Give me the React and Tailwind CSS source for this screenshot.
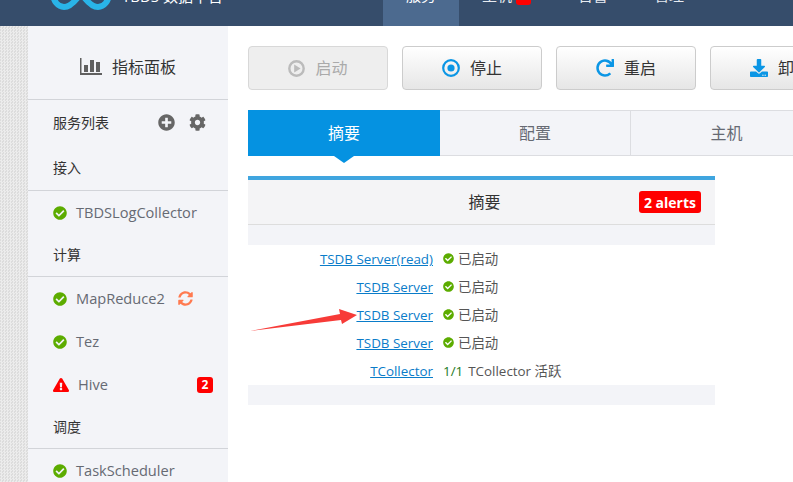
import { FaCheckCircle, FaExclamationTriangle, FaPlusCircle, FaCog, FaSyncAlt, FaRedo, FaDownload } from "react-icons/fa";

const font = "font-['Open_Sans','Noto_Sans_CJK_SC',sans-serif]";

function CheckIcon({ className }) {
  return <FaCheckCircle className={"text-[#5cac00] " + className} />;
}

function ActionButton({ icon, label, disabled }) {
  return (
    <div
      className={
        "flex h-[44px] w-[140px] shrink-0 items-center justify-center gap-[10px] rounded-[4px] border text-[16px] " +
        (disabled
          ? "border-[#d8d8d8] bg-[#eeeeee] text-[#aaaaaa]"
          : "border-[#cccccc] bg-gradient-to-b from-white to-[#e6e6e6] text-[#333333]")
      }
    >
      {icon}
      <span className="whitespace-nowrap">{label}</span>
    </div>
  );
}

function GroupTitle({ children, className = "h-[43px]" }) {
  return (
    <div className={"flex items-center border-b border-[#d2d4d9] pb-[2px] pl-[25px] text-[14px] text-[#333333] " + className}>
      {children}
    </div>
  );
}

function ServiceRow({ icon, name, extra }) {
  return (
    <div className="flex h-[43px] items-center pl-[25px] text-[14.6px] text-[#666a73]">
      {icon || <CheckIcon className="mr-[9px] size-[14px]" />}
      <span>{name}</span>
      {extra}
    </div>
  );
}

function SummaryRow({ name, children }) {
  return (
    <div className="flex h-[28px] items-center text-[13.4px]">
      <a href="#" className="w-[185px] shrink-0 text-right text-[#0a7cc9] underline">
        {name}
      </a>
      <div className="ml-[10px] flex items-center text-[#555555]">{children}</div>
    </div>
  );
}

function Started() {
  return (
    <>
      <CheckIcon className="mr-[4px] size-[11px]" />
      已启动
    </>
  );
}

export default function App() {
  return (
    <div className={"relative h-[482px] w-[793px] overflow-hidden bg-white " + font}>
      {/* top nav, cut off by the screenshot */}
      <div className="flex h-[26px] bg-[#364d6b]">
        <div className="relative w-[383px] shrink-0 overflow-hidden">
          <svg className="absolute top-[-26px] left-[50px]" width="62" height="39" viewBox="0 0 62 39" fill="none">
            <path d="M31 19 C24 8 18 5 13 5 C7 5 3 11 3 19 C3 27 8 33 14 33 C20 33 25 28 31 19 C37 10 42 5 48 5 C55 5 59 11 59 19 C59 27 54 33 48 33 C43 33 37 28 31 19" stroke="#29b4e8" strokeWidth="6" />
          </svg>
          <span className="absolute top-[-14px] left-[122px] whitespace-nowrap text-[15px] leading-[20px] text-white">
            TBDS 数据平台
          </span>
        </div>
        <div className="relative flex w-[76px] shrink-0 justify-center overflow-hidden bg-[#4c6a8f]">
          <span className="absolute top-[-15px] text-[15px] leading-[20px] text-white">服务</span>
        </div>
        <div className="relative w-[119px] shrink-0 overflow-hidden">
          <span className="absolute top-[-15px] left-[23px] whitespace-nowrap text-[15px] leading-[20px] text-[#e6eaf0]">主机</span>
          <span className="absolute top-[-8px] left-[57px] h-[13px] w-[15px] rounded-[3px] bg-[#ff0000]" />
        </div>
        <div className="relative w-[76px] shrink-0 overflow-hidden">
          <span className="absolute top-[-15px] left-0 whitespace-nowrap text-[15px] leading-[20px] text-[#e6eaf0]">告警</span>
        </div>
        <div className="relative w-[60px] shrink-0 overflow-hidden">
          <span className="absolute top-[-15px] left-0 whitespace-nowrap text-[15px] leading-[20px] text-[#e6eaf0]">管理</span>
        </div>
      </div>

      <div className="flex h-[456px]">
        {/* textured gutter */}
        <div className="w-[28px] shrink-0 bg-[conic-gradient(#ececec_25%,#dcdcdc_0_50%,#ececec_0_75%,#dcdcdc_0)] bg-[size:3px_3px]" />

        {/* sidebar */}
        <div className="w-[200px] shrink-0 overflow-hidden bg-[#f3f4f8]">
          <div className="flex h-[74px] items-center justify-center gap-[10px] border-b border-[#d2d4d9] pt-[8px] text-[16px] text-[#333333]">
            <svg className="text-[#606060]" width="22" height="17" viewBox="0 0 22 17" fill="currentColor">
              <rect x="0" y="0" width="1.5" height="17" />
              <rect x="0" y="15" width="22" height="2" />
              <rect x="4" y="7" width="4" height="7" />
              <rect x="10" y="2" width="4" height="12" />
              <rect x="16" y="4" width="4" height="10" />
            </svg>
            指标面板
          </div>
          <div className="flex h-[45px] items-center pl-[25px] text-[14px] text-[#333333]">
            <span>服务列表</span>
            <FaPlusCircle className="ml-[49px] size-[17px] text-[#666666]" />
            <FaCog className="ml-[14px] size-[17px] text-[#666666]" />
          </div>
          <GroupTitle className="h-[46px] pt-[2px]">接入</GroupTitle>
          <ServiceRow name="TBDSLogCollector" />
          <GroupTitle>计算</GroupTitle>
          <ServiceRow
            name="MapReduce2"
            extra={<FaSyncAlt className="ml-[13px] size-[15px] text-[#ff7a50]" />}
          />
          <ServiceRow name="Tez" />
          <ServiceRow
            name="Hive"
            icon={<FaExclamationTriangle className="mr-[9px] size-[16px] text-[#ff0000]" />}
            extra={
              <span className="ml-auto mr-[15px] flex h-[16px] w-[16px] items-center justify-center rounded-[3px] bg-[#ff0000] text-[12px] font-bold text-white">
                2
              </span>
            }
          />
          <GroupTitle>调度</GroupTitle>
          <ServiceRow name="TaskScheduler" />
        </div>

        {/* main */}
        <div className="min-w-0 flex-1 overflow-hidden pt-[20px] pl-[20px]">
          <div className="flex gap-[14px]">
            <ActionButton
              disabled
              label="启动"
              icon={
                <svg width="17" height="17" viewBox="0 0 17 17" className="text-[#bbbbbb]">
                  <circle cx="8.5" cy="8.5" r="7.2" fill="none" stroke="currentColor" strokeWidth="2.4" />
                  <polygon points="6.2,4.5 12.6,8.5 6.2,12.5" fill="currentColor" />
                </svg>
              }
            />
            <ActionButton
              label="停止"
              icon={
                <svg width="18" height="18" viewBox="0 0 18 18" className="text-[#0b96e5]">
                  <circle cx="9" cy="9" r="7.8" fill="none" stroke="currentColor" strokeWidth="2.2" />
                  <circle cx="9" cy="9" r="3.6" fill="currentColor" />
                </svg>
              }
            />
            <ActionButton label="重启" icon={<FaRedo className="size-[18px] text-[#0b96e5]" />} />
            <ActionButton label="卸载" icon={<FaDownload className="size-[18px] text-[#0b96e5]" />} />
          </div>

          {/* tabs */}
          <div className="relative mt-[20px] flex h-[46px] w-[600px] text-[16px]">
            <div className="flex w-[192px] shrink-0 items-center justify-center bg-[#0592e1] text-white">摘要</div>
            <div className="flex w-[191px] shrink-0 items-center justify-center border-y border-r border-[#dcdde1] bg-[#f3f4f8] text-[#666a73]">配置</div>
            <div className="flex w-[191px] shrink-0 items-center justify-center border-y border-[#dcdde1] bg-[#f3f4f8] text-[#666a73]">主机</div>
            <div className="flex-1 border-y border-[#dcdde1] bg-[#f3f4f8]" />
            <span className="absolute top-[46px] left-[86px] size-0 border-x-[10px] border-t-[7px] border-x-transparent border-t-[#0592e1]" />
          </div>

          {/* summary panel */}
          <div className="mt-[20px] w-[467px]">
            <div className="relative flex h-[49px] items-center justify-center border-t-[4px] border-b border-t-[#3fa5df] border-b-[#dddddd] bg-[#f4f4f6] pl-[6px] text-[16px] text-[#333333]">
              摘要
              <span className="absolute right-[14px] top-[11px] flex h-[22px] items-center rounded-[3px] bg-[#ff0000] px-[5px] text-[14px] font-bold text-white">
                2 alerts
              </span>
            </div>
            <div className="h-[20px] bg-[#f3f4f8]" />
            <div className="h-[140px]">
              <SummaryRow name="TSDB Server(read)"><Started /></SummaryRow>
              <SummaryRow name="TSDB Server"><Started /></SummaryRow>
              <SummaryRow name="TSDB Server"><Started /></SummaryRow>
              <SummaryRow name="TSDB Server"><Started /></SummaryRow>
              <SummaryRow name="TCollector">
                <span className="text-[#1d7a1d]">1/1</span>
                <span className="ml-[5px]">TCollector 活跃</span>
              </SummaryRow>
            </div>
            <div className="h-[20px] bg-[#f3f4f8]" />
          </div>
        </div>
      </div>

      {/* red annotation arrow */}
      <svg className="absolute top-[305px] left-[248px]" width="110" height="28" viewBox="0 0 110 28">
        <polygon points="2,26 92,9 91,4 109,10 94,19 93,15" fill="#f73b38" />
      </svg>
    </div>
  );
}
